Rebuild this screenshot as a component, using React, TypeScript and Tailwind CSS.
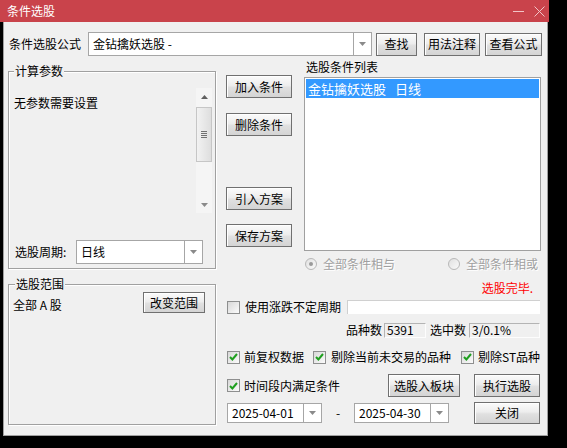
import type { ReactNode } from "react";

function Btn({ children, className = "" }: { children: ReactNode; className?: string }) {
  return (
    <button
      className={`flex items-center justify-center border border-[#707070] bg-[linear-gradient(#fbfbfb,#ededed_45%,#e0e0e0_55%,#d4d4d4)] shadow-[inset_1px_1px_0_#fff] text-[12px] leading-[14px] text-black shrink-0 ${className}`}
    >
      {children}
    </button>
  );
}

function DownArrow() {
  return (
    <svg width="7" height="4" viewBox="0 0 7 4">
      <path d="M0 0 H7 L3.5 4 Z" fill="#8a8a8a" />
    </svg>
  );
}

function Combo({ value, className = "" }: { value: string; className?: string }) {
  return (
    <div className={`flex border border-[#a6a6a6] bg-white shrink-0 ${className}`}>
      <div className="flex-1 flex items-center pl-[4px] whitespace-nowrap overflow-hidden">{value}</div>
      <div className="w-[18px] border-l border-[#a6a6a6] flex items-center justify-center">
        <DownArrow />
      </div>
    </div>
  );
}

function Check({ checked = false }: { checked?: boolean }) {
  return (
    <span className="w-[13px] h-[13px] border border-[#8e8f8f] bg-linear-to-br from-[#d8d8d8] to-[#fbfbfb] flex items-center justify-center shrink-0">
      {checked && (
        <svg width="9" height="8" viewBox="0 0 9 8">
          <path d="M1 4 L3.4 6.5 L8 1" stroke="#1f9f1f" strokeWidth="2" fill="none" />
        </svg>
      )}
    </span>
  );
}

function Radio({ on = false }: { on?: boolean }) {
  return (
    <span className="w-[12px] h-[12px] rounded-full border border-[#b8b8b8] bg-linear-to-br from-[#e0e0e0] to-[#fafafa] flex items-center justify-center shrink-0">
      {on && <span className="w-[4px] h-[4px] rounded-full bg-[#9a9a9a]" />}
    </span>
  );
}

function Sunken({ value, className = "" }: { value: string; className?: string }) {
  return (
    <div
      className={`h-[15px] flex items-center pl-[2px] border border-t-[#b4b4b4] border-l-[#b4b4b4] border-b-[#fdfdfd] border-r-[#fdfdfd] bg-[#f0f0f0] shrink-0 ${className}`}
    >
      {value}
    </div>
  );
}

function GroupBox({ title, left, className = "", children }: { title: string; left: string; className?: string; children: ReactNode }) {
  return (
    <div className={`relative border border-[#a0a0a0] shadow-[1px_1px_0_#fff,inset_1px_1px_0_#fff] ${className}`}>
      <span className={`absolute -top-[8px] px-[1px] bg-[#f0f0f0] leading-[14px] ${left}`}>{title}</span>
      {children}
    </div>
  );
}

export default function App() {
  return (
    <div className="w-[567px] h-[448px] bg-black font-['Noto_Sans_CJK_SC','Noto_Sans',sans-serif] text-[12px] leading-[14px] text-black">
      <div className="w-[549px] h-[436px] flex flex-col">
        {/* title bar */}
        <div className="h-[22px] bg-[#c9434b] flex items-center pl-[7px] pr-[4px] shrink-0">
          <span className="text-white">条件选股</span>
          <span className="ml-auto w-[11px] h-[1px] bg-[#f1c4c7]" />
          <svg className="ml-[10px]" width="11" height="11" viewBox="0 0 11 11">
            <path d="M0.5 0.5 L10.5 10.5 M10.5 0.5 L0.5 10.5" stroke="#f1c4c7" strokeWidth="1" />
          </svg>
        </div>

        <div className="ml-[3px] w-[545px] flex-1 border border-t-0 border-[#a0a0a0] bg-[#f0f0f0]">
          {/* formula row */}
          <div className="flex items-center mt-[10px] ml-[5px] h-[24px]">
            <span className="w-[79px] shrink-0">条件选股公式</span>
            <Combo value="金钻擒妖选股 -" className="w-[284px] h-[24px]" />
            <Btn className="ml-[4px] w-[41px] h-[23px]">查找</Btn>
            <Btn className="ml-[7px] w-[56px] h-[23px]">用法注释</Btn>
            <Btn className="ml-[5px] w-[57px] h-[23px]">查看公式</Btn>
          </div>

          <div className="flex ml-[4px]">
            {/* left column */}
            <div className="w-[208px] pt-[15px] shrink-0">
              <GroupBox title="计算参数" left="left-[5px]" className="h-[198px]">
                <div className="mt-[16px] mx-[3px] h-[125px] flex">
                  <div className="flex-1 pl-[2px] pt-[8px]">无参数需要设置</div>
                  <div className="w-[16px] flex flex-col bg-[#f5f5f5]">
                    <div className="h-[17px] flex items-center justify-center">
                      <svg width="7" height="4" viewBox="0 0 7 4">
                        <path d="M0 4 H7 L3.5 0 Z" fill="#606060" />
                      </svg>
                    </div>
                    <div className="mt-[2px] h-[55px] border border-[#c6c6c6] bg-linear-to-r from-[#f2f2f2] to-[#dedede] flex flex-col items-center justify-center gap-[1px]">
                      <span className="w-[6px] h-[1px] bg-[#707070]" />
                      <span className="w-[6px] h-[1px] bg-[#707070]" />
                      <span className="w-[6px] h-[1px] bg-[#707070]" />
                      <span className="w-[6px] h-[1px] bg-[#707070]" />
                    </div>
                    <div className="flex-1" />
                    <div className="h-[17px] flex items-center justify-center">
                      <DownArrow />
                    </div>
                  </div>
                </div>
                <div className="mt-[27px] flex items-center pl-[6px]">
                  <span className="w-[61px] shrink-0">选股周期:</span>
                  <Combo value="日线" className="w-[127px] h-[24px]" />
                </div>
              </GroupBox>

              <GroupBox title="选股范围" left="left-[6px]" className="mt-[15px] h-[141px]">
                <div className="flex justify-between items-start pt-[7px] pl-[4px] pr-[10px]">
                  <span className="mt-[6px]">全部 A 股</span>
                  <Btn className="w-[62px] h-[21px]">改变范围</Btn>
                </div>
              </GroupBox>
            </div>

            {/* right area */}
            <div className="ml-[10px] w-[315px] flex flex-col">
              <div className="flex">
                <div className="w-[66px] flex flex-col shrink-0">
                  <Btn className="mt-[19px] h-[23px]">加入条件</Btn>
                  <Btn className="mt-[15px] h-[23px]">删除条件</Btn>
                  <Btn className="mt-[51px] h-[23px]">引入方案</Btn>
                  <Btn className="mt-[14px] h-[23px]">保存方案</Btn>
                </div>
                <div className="ml-[12px] w-[237px] flex flex-col">
                  <span className="mt-[4px] pl-[2px]">选股条件列表</span>
                  <div className="mt-[3px] h-[174px] border border-[#a0a0a0] bg-white p-[1px]">
                    <div className="h-[19px] bg-[#3399ff] text-white text-[13px] pl-[2px] flex items-center">
                      <span>金钻擒妖选股</span>
                      <span className="ml-[9px]">日线</span>
                    </div>
                  </div>
                  <div className="mt-[6px] h-[14px] flex items-center pl-[1px] text-[#a0a0a0] [text-shadow:1px_1px_0_#fff]">
                    <Radio on />
                    <span className="ml-[6px]">全部条件相与</span>
                    <span className="ml-[53px]">
                      <Radio />
                    </span>
                    <span className="ml-[6px]">全部条件相或</span>
                  </div>
                </div>
              </div>

              <div className="mt-[10px] h-[14px] text-right pr-[8px] text-[#ff0000]">选股完毕.</div>

              <div className="mt-[5px] h-[14px] flex items-center">
                <span className="ml-[1px]">
                  <Check />
                </span>
                <span className="ml-[5px]">使用涨跌不定周期</span>
                <div className="ml-auto mr-[1px] w-[193px] h-[14px] bg-white border-t border-l border-[#d0d0d0]" />
              </div>

              <div className="mt-[9px] h-[14px] flex items-center justify-end pr-[1px]">
                <span>品种数</span>
                <Sunken value="5391" className="ml-[2px] w-[42px]" />
                <span className="ml-[4px]">选中数</span>
                <Sunken value="3/0.1%" className="ml-[3px] w-[71px]" />
              </div>

              <div className="mt-[13px] h-[14px] flex items-center">
                <span className="ml-[1px]">
                  <Check checked />
                </span>
                <span className="ml-[4px]">前复权数据</span>
                <span className="ml-[9px]">
                  <Check checked />
                </span>
                <span className="ml-[5px]">剔除当前未交易的品种</span>
                <span className="ml-[10px]">
                  <Check checked />
                </span>
                <span className="ml-[4px]">剔除ST品种</span>
              </div>

              <div className="mt-[10px] h-[23px] flex items-center">
                <span className="ml-[1px]">
                  <Check checked />
                </span>
                <span className="ml-[4px]">时间段内满足条件</span>
                <Btn className="ml-auto w-[72px] h-[23px]">选股入板块</Btn>
                <Btn className="ml-[14px] mr-[1px] w-[66px] h-[23px]">执行选股</Btn>
              </div>

              <div className="mt-[5px] h-[22px] flex items-center">
                <Combo value="2025-04-01" className="ml-[1px] w-[95px] h-[20px]" />
                <span className="w-[32px] text-center">-</span>
                <Combo value="2025-04-30" className="w-[95px] h-[20px]" />
                <Btn className="ml-auto mr-[1px] w-[66px] h-[22px]">关闭</Btn>
              </div>
            </div>
          </div>
        </div>
      </div>
    </div>
  );
}
